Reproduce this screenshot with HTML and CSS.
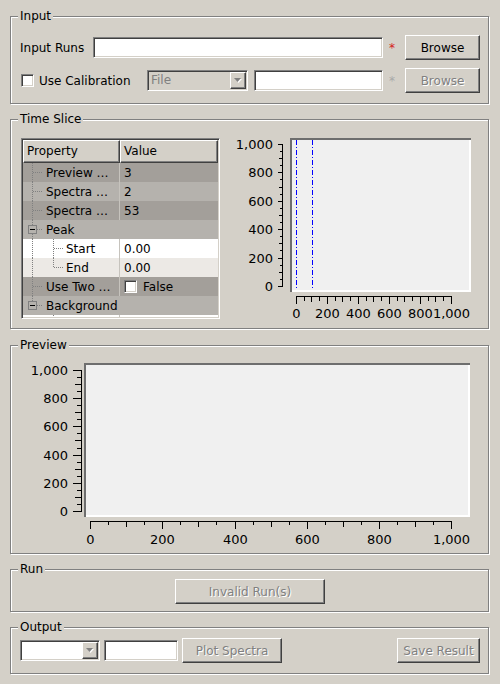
FILE: index.html
```html
<!DOCTYPE html>
<html>
<head>
<meta charset="utf-8">
<title>Time Slice</title>
<link rel="stylesheet" href="styles.css">
</head>
<body>
<div class="window">
  <fieldset class="group g-input">
    <legend>Input</legend>
    <div class="row">
      <span class="label label-runs">Input Runs</span>
      <span class="edit edit-runs"></span>
      <span class="star">*</span>
      <button class="btn btn-browse" type="button">Browse</button>
    </div>
    <div class="row row-second">
      <span class="check check-calib"></span>
      <span class="label label-calib">Use Calibration</span>
      <span class="combo combo-file is-off">
        <span class="combo-text">File</span>
        <span class="combo-btn"><svg width="9" height="6" viewBox="0 0 9 6"><polygon points="1,1 8,1 4.5,5" fill="#fff"/><polygon points="0,0 7,0 3.5,4" fill="#808080"/></svg></span>
      </span>
      <span class="edit edit-calib"></span>
      <span class="star star-off">*</span>
      <button class="btn btn-browse is-disabled" type="button">Browse</button>
    </div>
  </fieldset>

  <fieldset class="group g-time">
    <legend>Time Slice</legend>
    <div class="ts-row">
      <div class="tree">
        <div class="tree-head">
          <span class="th th-prop">Property</span>
          <span class="th th-val">Value</span>
        </div>
        <div class="tree-body">
          <div class="tr tr-dark">
            <span class="tc tc-prop"><svg class="branch" width="23" height="19"><path class="dot" d="M9.5 0V19M10 9.5H19"/></svg>Preview …</span>
            <span class="tc tc-val">3</span>
          </div>
          <div class="tr tr-light">
            <span class="tc tc-prop"><svg class="branch" width="23" height="19"><path class="dot" d="M9.5 0V19M10 9.5H19"/></svg>Spectra …</span>
            <span class="tc tc-val">2</span>
          </div>
          <div class="tr tr-dark">
            <span class="tc tc-prop"><svg class="branch" width="23" height="19"><path class="dot" d="M9.5 0V19M10 9.5H19"/></svg>Spectra …</span>
            <span class="tc tc-val">53</span>
          </div>
          <div class="tr tr-light tr-group">
            <span class="tc tc-prop"><svg class="branch" width="23" height="19"><path class="dot" d="M9.5 0V5M9.5 14V19M14 9.5H19"/><rect class="box" x="5.5" y="5.5" width="8" height="8"/><path class="minus" d="M7 9.5H12"/></svg>Peak</span>
            <span class="tc tc-val"></span>
          </div>
          <div class="tr tr-white">
            <span class="tc tc-prop"><svg class="branch" width="43" height="19"><path class="dot" d="M9.5 0V19M30.5 0V19M31 9.5H40"/></svg>Start</span>
            <span class="tc tc-val">0.00</span>
          </div>
          <div class="tr tr-alt">
            <span class="tc tc-prop"><svg class="branch" width="43" height="19"><path class="dot" d="M9.5 0V19M30.5 0V10M31 9.5H40"/></svg>End</span>
            <span class="tc tc-val">0.00</span>
          </div>
          <div class="tr tr-dark">
            <span class="tc tc-prop"><svg class="branch" width="23" height="19"><path class="dot" d="M9.5 0V19M10 9.5H19"/></svg>Use Two …</span>
            <span class="tc tc-val"><span class="check"></span><span class="val-text">False</span></span>
          </div>
          <div class="tr tr-light tr-group">
            <span class="tc tc-prop"><svg class="branch" width="23" height="19"><path class="dot" d="M9.5 0V5M14 9.5H19"/><rect class="box" x="5.5" y="5.5" width="8" height="8"/><path class="minus" d="M7 9.5H12"/></svg>Background</span>
            <span class="tc tc-val"></span>
          </div>
          <div class="tr tr-white">
            <span class="tc tc-prop"><svg class="branch" width="43" height="19"><path class="dot" d="M30.5 0V19M31 9.5H40"/></svg></span>
            <span class="tc tc-val"></span>
          </div>
        </div>
      </div>
      <svg class="plot plot-slice" width="260" height="195" viewBox="0 0 260 195">
        <rect x="70" y="8" width="181" height="154" fill="#f0f0f0"/>
        <rect x="70" y="160" width="181" height="2" fill="#fff"/>
        <rect x="249" y="8" width="2" height="154" fill="#fff"/>
        <rect x="70" y="8" width="181" height="2" fill="#6e6e6e"/>
        <rect x="70" y="8" width="2" height="154" fill="#6e6e6e"/>
        <path class="marker" d="M76.5 10V160M92.5 10V160"/>
        <g class="ticks">
          <path d="M62.5 14V157"/>
          <path d="M58 14.5H63M58 42.5H63M58 71.5H63M58 99.5H63M58 128.5H63M58 156.5H63"/>
          <path d="M59 28.5H63M59 57.5H63M59 85.5H63M59 113.5H63M59 142.5H63"/>
          <path d="M60 21.5H63M60 35.5H63M60 49.5H63M60 64.5H63M60 78.5H63M60 92.5H63M60 106.5H63M60 120.5H63M60 135.5H63M60 149.5H63"/>
          <path d="M76 166.5H232"/>
          <path d="M76.5 166V174M107.5 166V174M138.5 166V174M169.5 166V174M200.5 166V174M231.5 166V174"/>
          <path d="M91.5 166V172M122.5 166V172M153.5 166V172M184.5 166V172M215.5 166V172"/>
          <path d="M84.5 166V171M99.5 166V171M115.5 166V171M130.5 166V171M146.5 166V171M161.5 166V171M177.5 166V171M192.5 166V171M208.5 166V171M223.5 166V171"/>
        </g>
        <g class="axis-text axis-y">
          <text x="53" y="14.5">1,000</text>
          <text x="53" y="42.5">800</text>
          <text x="53" y="71.5">600</text>
          <text x="53" y="99.5">400</text>
          <text x="53" y="128.5">200</text>
          <text x="53" y="156.5">0</text>
        </g>
        <g class="axis-text axis-x">
          <text x="76.5" y="183">0</text>
          <text x="107.5" y="183">200</text>
          <text x="138.5" y="183">400</text>
          <text x="169.5" y="183">600</text>
          <text x="200.5" y="183">800</text>
          <text x="231.5" y="183">1,000</text>
        </g>
      </svg>
    </div>
  </fieldset>

  <fieldset class="group g-preview">
    <legend>Preview</legend>
    <svg class="plot plot-preview" width="460" height="198" viewBox="0 0 460 198">
      <rect x="64" y="11" width="386" height="154" fill="#f0f0f0"/>
      <rect x="64" y="163" width="386" height="2" fill="#fff"/>
      <rect x="448" y="11" width="2" height="154" fill="#fff"/>
      <rect x="64" y="11" width="386" height="2" fill="#6e6e6e"/>
      <rect x="64" y="11" width="2" height="154" fill="#6e6e6e"/>
      <g class="ticks">
        <path d="M61.5 18V160"/>
        <path d="M53 18.5H62M53 46.5H62M53 74.5H62M53 103.5H62M53 131.5H62M53 159.5H62"/>
        <path d="M55 32.5H62M55 60.5H62M55 88.5H62M55 117.5H62M55 145.5H62"/>
        <path d="M57 25.5H62M57 39.5H62M57 53.5H62M57 67.5H62M57 81.5H62M57 96.5H62M57 110.5H62M57 124.5H62M57 138.5H62M57 152.5H62"/>
        <path d="M70 169.5H432"/>
        <path d="M70.5 169V177M142.5 169V177M215.5 169V177M287.5 169V177M359.5 169V177M431.5 169V177"/>
        <path d="M106.5 169V175M178.5 169V175M251.5 169V175M323.5 169V175M395.5 169V175"/>
        <path d="M88.5 169V173M124.5 169V173M160.5 169V173M196.5 169V173M233.5 169V173M269.5 169V173M305.5 169V173M341.5 169V173M377.5 169V173M413.5 169V173"/>
      </g>
      <g class="axis-text axis-y">
        <text x="48" y="18.5">1,000</text>
        <text x="48" y="46.5">800</text>
        <text x="48" y="74.5">600</text>
        <text x="48" y="103.5">400</text>
        <text x="48" y="131.5">200</text>
        <text x="48" y="159.5">0</text>
      </g>
      <g class="axis-text axis-x">
        <text x="70.5" y="187">0</text>
        <text x="142.5" y="187">200</text>
        <text x="215.5" y="187">400</text>
        <text x="287.5" y="187">600</text>
        <text x="359.5" y="187">800</text>
        <text x="431.5" y="187">1,000</text>
      </g>
    </svg>
  </fieldset>

  <fieldset class="group g-run">
    <legend>Run</legend>
    <div class="run-row">
      <button class="btn btn-run is-disabled" type="button">Invalid Run(s)</button>
    </div>
  </fieldset>

  <fieldset class="group g-output">
    <legend>Output</legend>
    <div class="row out-row">
      <span class="combo combo-out">
        <span class="combo-text"></span>
        <span class="combo-btn"><svg width="9" height="6" viewBox="0 0 9 6"><polygon points="1,1 8,1 4.5,5" fill="#fff"/><polygon points="0,0 7,0 3.5,4" fill="#808080"/></svg></span>
      </span>
      <span class="edit edit-out"></span>
      <button class="btn btn-plot is-disabled" type="button">Plot Spectra</button>
      <button class="btn btn-save is-disabled" type="button">Save Result</button>
    </div>
  </fieldset>
</div>
</body>
</html>
```

FILE: styles.css
```css
* { box-sizing: border-box; }
html, body { margin: 0; padding: 0; }
body {
  width: 500px;
  height: 684px;
  overflow: hidden;
  background: #d4d0c8;
  font-family: "DejaVu Sans", "Liberation Sans", sans-serif;
  font-size: 12px;
  line-height: 14px;
  color: #000;
}
.window {
  display: flex;
  flex-direction: column;
  padding: 9px 11px 0 10px;
}
.group {
  margin: 0;
  padding: 0 8px 0 9px;
  min-width: 0;
  width: 479px;
  border: 1px solid #808080;
  box-shadow: inset 1px 1px 0 #fff, 1px 1px 0 #fff;
}
.group > legend {
  padding: 0 2px;
  margin-left: -2px;
  line-height: 14px;
  background: #d4d0c8;
}
.g-input { height: 95px; padding-top: 12px; }
.g-time { height: 217px; margin-top: 8px; padding-top: 4px; }
.g-preview { height: 216px; margin-top: 9px; }
.g-run { height: 50px; margin-top: 8px; padding-top: 3px; }
.g-output { height: 54px; margin-top: 8px; padding-top: 4px; }

.row { display: flex; align-items: center; height: 25px; }
.row-second { margin-top: 8px; }
.label { flex: none; white-space: nowrap; }
.label-runs { width: 73px; }
.label-calib { width: 108px; margin-left: 5px; }

.edit, .combo, .check {
  flex: none;
  background: #fff;
  border: 1px solid;
  border-color: #808080 #fff #fff #808080;
  box-shadow: inset 1px 1px 0 #404040, inset -1px -1px 0 #d4d0c8;
}
.edit { height: 21px; }
.edit-runs { width: 290px; }
.edit-calib { width: 129px; margin-left: 6px; }
.edit-out { width: 74px; margin-left: 4px; }
.check { width: 13px; height: 13px; }
.check-calib { margin-left: 1px; }

.combo { display: flex; height: 21px; padding: 1px; }
.combo.is-off { background: #d4d0c8; }
.combo-file { width: 101px; }
.combo-out { width: 80px; }
.combo-text { flex: 1; padding-left: 2px; line-height: 17px; color: #000; }
.is-off .combo-text { color: #808080; }
.combo-btn {
  flex: none;
  width: 16px;
  height: 17px;
  display: flex;
  align-items: center;
  justify-content: center;
  background: #d4d0c8;
  border: 1px solid;
  border-color: #fff #404040 #404040 #fff;
  box-shadow: inset -1px -1px 0 #808080;
}
.combo-btn svg { display: block; margin: 1px 0 0 1px; }

.star { flex: none; width: 22px; padding-left: 6px; color: #d42020; }
.star-off { color: #a8a8a8; }

.btn {
  flex: none;
  font: inherit;
  line-height: 14px;
  color: #000;
  margin: 0;
  padding: 0;
  height: 25px;
  background: #d4d0c8;
  border: 1px solid;
  border-color: #fff #404040 #404040 #fff;
  box-shadow: inset -1px -1px 0 #808080;
  text-align: center;
}
.btn.is-disabled { color: #808080; text-shadow: 1px 1px 0 #fff; }
.btn-browse { width: 75px; }
.btn-run { width: 150px; }
.btn-plot { width: 100px; margin-left: 4px; }
.btn-save { width: 83px; margin-left: auto; }
.run-row { display: flex; justify-content: center; }

.ts-row { display: flex; align-items: flex-start; }
.tree {
  flex: none;
  margin: 8px 0 0 1px;
  width: 199px;
  height: 181px;
  padding: 1px;
  overflow: hidden;
  background: #fff;
  border: 1px solid;
  border-color: #808080 #fff #fff #808080;
  box-shadow: inset 1px 1px 0 #404040, inset -1px -1px 0 #d4d0c8;
}
.tree-head { display: flex; height: 23px; }
.th {
  height: 23px;
  padding-left: 3px;
  line-height: 20px;
  background: #d4d0c8;
  border: 1px solid;
  border-color: #fff #404040 #404040 #fff;
  box-shadow: inset -1px -1px 0 #808080;
}
.th-prop { width: 97px; }
.th-val { flex: 1; }
.tree-body { height: 154px; overflow: hidden; }
.tr { display: flex; height: 19px; }
.tr-dark { background: #a39f9a; }
.tr-light { background: #b5b2ad; }
.tr-white { background: #fff; }
.tr-alt { background: #ece9e5; }
.tc { display: flex; align-items: center; height: 19px; white-space: nowrap; }
.tc-prop { width: 97px; border-right: 1px solid #c6c3bd; overflow: visible; }
.tr-group .tc-prop { border-right-color: transparent; }
.tc-val { flex: 1; padding-left: 4px; }
.val-text { margin-left: 6px; }
.branch { flex: none; display: block; }
.dot { stroke: #808080; stroke-dasharray: 1 1; fill: none; }
.box { stroke: #808080; fill: none; }
.minus { stroke: #000; fill: none; }

.plot { display: block; flex: none; }
.ticks path { stroke: #000; fill: none; }
.marker { stroke: #0000ff; stroke-dasharray: 5 2 1 2; fill: none; }
.axis-text text {
  font-family: "DejaVu Sans", sans-serif;
  font-size: 13px;
  fill: #000;
  dominant-baseline: central;
}
.axis-y text { text-anchor: end; }
.axis-x text { text-anchor: middle; }
```
